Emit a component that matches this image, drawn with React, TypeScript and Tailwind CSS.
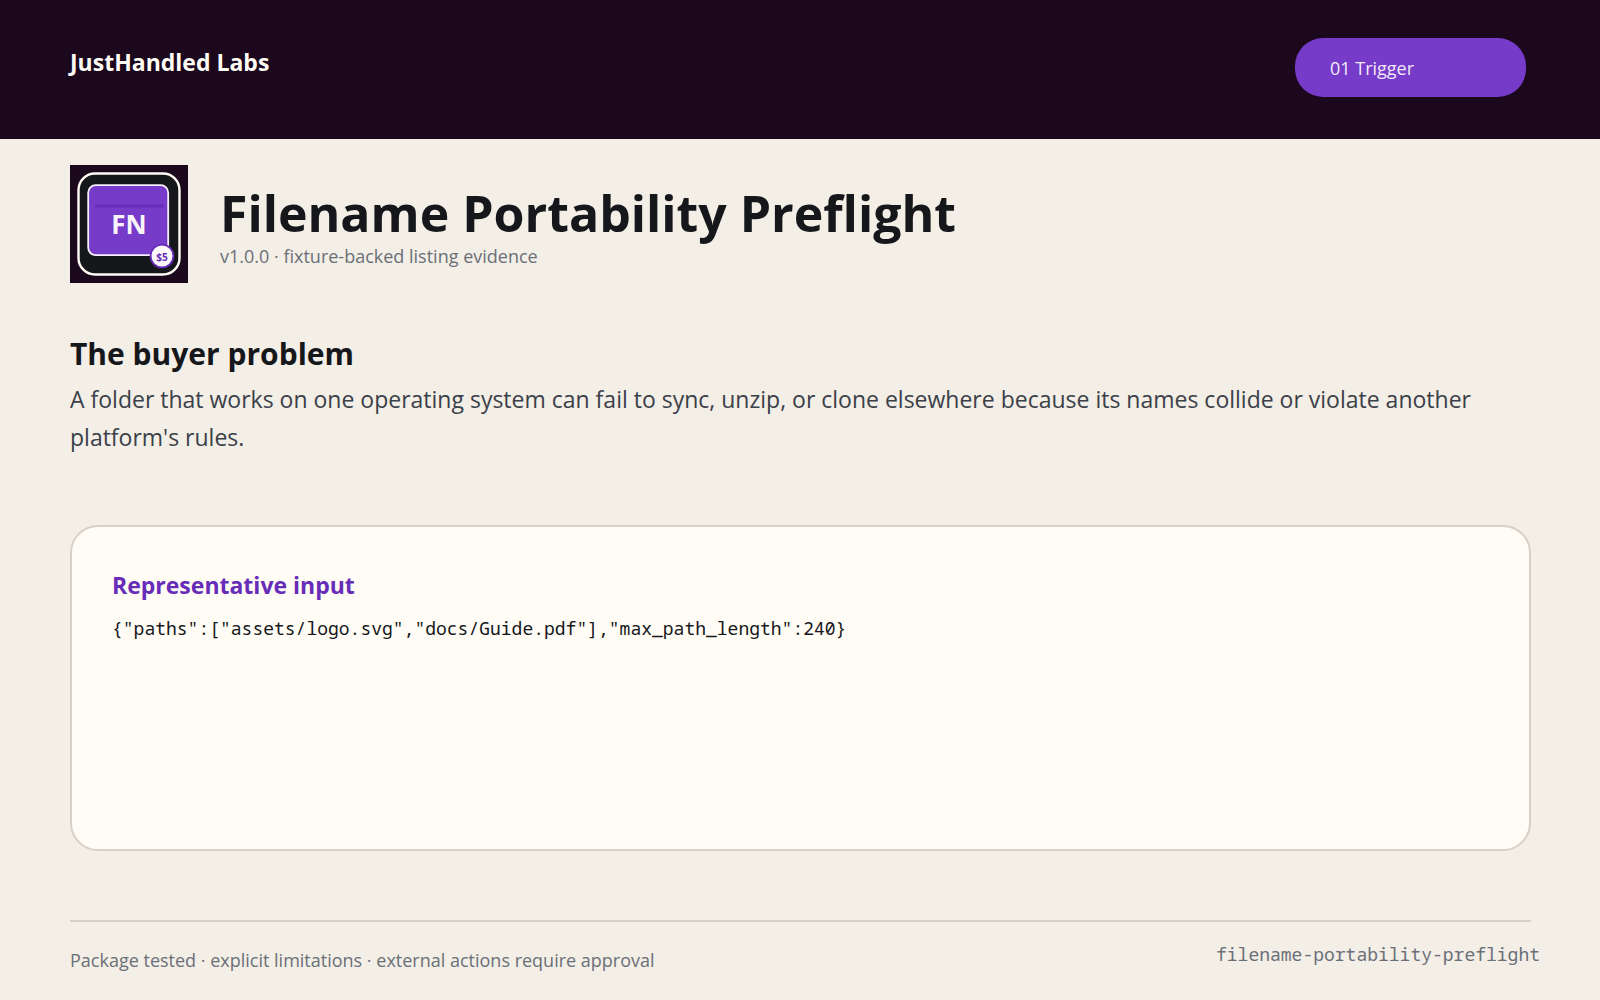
function ProductIcon() {
  return (
    <svg viewBox="0 0 118 118" className="size-[118px] shrink-0" role="img" aria-label="Filename Portability Preflight icon">
      <rect width="118" height="118" fill="#1b081d" />
      <rect x="8.5" y="8.5" width="101" height="101" rx="16.5" fill="#15171b" stroke="#fffcf5" strokeWidth="2.4" />
      <rect x="18.2" y="20.2" width="80" height="70" rx="7.5" fill="#763bc8" stroke="#f6eefb" strokeWidth="1.8" />
      <rect x="25.3" y="39.3" width="68.4" height="3.2" rx="0.6" fill="#672cb8" />
      <text x="59" y="69" textAnchor="middle" fontSize="26" className="fill-[#f9f4fa] font-['Open_Sans',sans-serif] font-bold">
        FN
      </text>
      <circle cx="92" cy="91" r="11.4" fill="#fcf7fa" stroke="#672cb8" strokeWidth="1.8" />
      <text x="92" y="95.5" textAnchor="middle" fontSize="10" className="fill-[#672cb8] font-['Open_Sans',sans-serif] font-bold">
        $5
      </text>
    </svg>
  );
}

export default function App() {
  return (
    <div className="flex min-h-screen flex-col bg-[#f3eee6] font-['Open_Sans','Noto_Sans',sans-serif] text-[#15171b]">
      <header className="flex items-start justify-between bg-[#1b081d] pt-[38px] pr-[74px] pb-[42px] pl-[70px]">
        <p className="pt-2 text-[23px] leading-8 font-bold text-[#fffcf5]">JustHandled Labs</p>
        <p className="w-[231px] rounded-[28px] bg-[#763bc8] pt-0.5 pl-[35px] text-[18px] leading-[57px] text-[#f3eafb]">01 Trigger</p>
      </header>

      <main className="pt-[26px] pr-[69px] pl-[70px]">
        <div className="flex gap-8">
          <ProductIcon />
          <div className="pt-[18px]">
            <h1 className="text-[50px] leading-[60px] font-bold">Filename Portability Preflight</h1>
            <p className="text-[18px] leading-[26px] text-[#6b7078]">v1.0.0 · fixture-backed listing evidence</p>
          </div>
        </div>

        <section className="mt-12">
          <h2 className="text-[30px] leading-[46px] font-bold">The buyer problem</h2>
          <p className="mt-[3px] text-[23px] leading-[38px] text-[#3b4049]">
            A folder that works on one operating system can fail to sync, unzip, or clone elsewhere because its names
            collide or violate another platform's rules.
          </p>
        </section>

        <section className="mt-[69px] min-h-[326px] rounded-[28px] border-2 border-[#d8d0c4] bg-[#fffcf5] px-10 pt-10">
          <h2 className="text-[23px] leading-9 font-bold text-[#672cb8]">Representative input</h2>
          <pre className="mt-2 font-['Noto_Sans_Mono','DejaVu_Sans_Mono',monospace] text-[18px] leading-[34px] whitespace-pre-wrap">
            <code className="font-['Noto_Sans_Mono','DejaVu_Sans_Mono',monospace]">{'{"paths":["assets/logo.svg","docs/Guide.pdf"],"max_path_length":240}'}</code>
          </pre>
        </section>
      </main>

      <footer className="mt-[69px] pr-[60px] pl-[70px] text-[18px] leading-7 text-[#6b7078]">
        <hr className="mr-[9px] border-t-2 border-[#d8d0c4]" />
        <div className="flex items-start justify-between">
          <p className="pt-6">Package tested · explicit limitations · external actions require approval</p>
          <p className="pt-[18px] font-['Noto_Sans_Mono','DejaVu_Sans_Mono',monospace]">filename-portability-preflight</p>
        </div>
      </footer>
    </div>
  );
}
